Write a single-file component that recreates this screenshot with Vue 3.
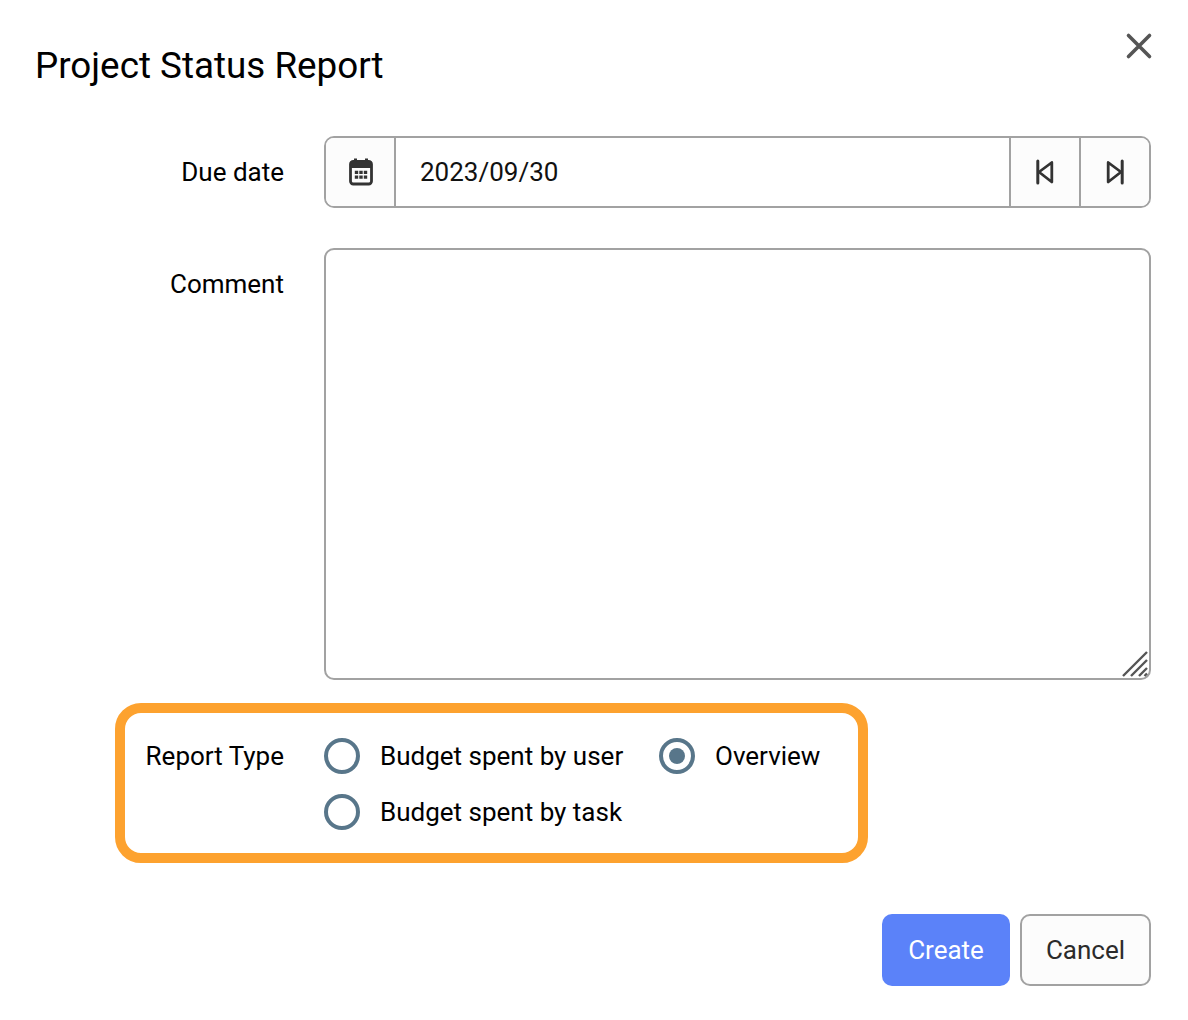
<script setup>
import { ref } from 'vue'

const dueDate = ref('2023/09/30')
const reportType = ref('overview')

const reportTypes = [
  { value: 'user', label: 'Budget spent by user' },
  { value: 'overview', label: 'Overview' },
  { value: 'task', label: 'Budget spent by task' },
]
</script>

<template>
  <div class="dialog">
    <header class="head">
      <h2 class="title">Project Status Report</h2>
      <button class="close" type="button" aria-label="Close">
        <svg width="28" height="28" viewBox="0 0 28 28">
          <path d="M3.5 3.5 L24.5 24.5 M24.5 3.5 L3.5 24.5" stroke="#555" stroke-width="3.6" stroke-linecap="round" fill="none" />
        </svg>
      </button>
    </header>

    <div class="row date-row">
      <label class="label">Due date</label>
      <div class="date-field">
        <button class="addon cal" type="button" aria-label="Open calendar">
          <svg width="26" height="28" viewBox="0 0 26 28">
            <path d="M6 0.5h3v4H6zM17 0.5h3v4h-3z" fill="#333" />
            <rect x="2.5" y="3.5" width="21" height="22.5" rx="2.8" fill="none" stroke="#333" stroke-width="2.8" />
            <rect x="2.5" y="3.5" width="21" height="6.5" fill="#333" />
            <path d="M6.8 12.8h3.4v3.2H6.8zM11.3 12.8h3.4v3.2h-3.4zM15.8 12.8h3.4v3.2h-3.4zM6.8 17.6h3.4v3.2H6.8zM11.3 17.6h3.4v3.2h-3.4zM15.8 17.6h3.4v3.2h-3.4z" fill="#333" />
          </svg>
        </button>
        <input v-model="dueDate" class="date-input" type="text" />
        <button class="addon step" type="button" aria-label="Previous">
          <svg width="20" height="26" viewBox="0 0 20 26">
            <path d="M2.8 2v22" stroke="#333" stroke-width="3" stroke-linecap="round" fill="none" />
            <path d="M16.8 3.5 L4 13 L16.8 23 Z" stroke="#333" stroke-width="2.8" stroke-linejoin="round" fill="none" />
          </svg>
        </button>
        <button class="addon step" type="button" aria-label="Next">
          <svg width="20" height="26" viewBox="0 0 20 26">
            <path d="M17.2 2v22" stroke="#333" stroke-width="3" stroke-linecap="round" fill="none" />
            <path d="M3.2 3.5 L16 13 L3.2 23 Z" stroke="#333" stroke-width="2.8" stroke-linejoin="round" fill="none" />
          </svg>
        </button>
      </div>
    </div>

    <div class="row comment-row">
      <label class="label">Comment</label>
      <div class="comment-wrap">
        <textarea class="comment"></textarea>
        <svg class="grip" width="28" height="28" viewBox="0 0 28 28">
          <path d="M2 26 L26 2 M10 26 L26 10 M18 26 L26 18 M23.5 26 L26 23.5" stroke="#555" stroke-width="2.4" fill="none" />
        </svg>
      </div>
    </div>

    <div class="report-box">
      <label class="label">Report Type</label>
      <div class="radios">
        <label
          v-for="item in reportTypes"
          :key="item.value"
          class="radio"
          @click="reportType = item.value"
        >
          <span class="dot" :class="{ on: reportType === item.value }"></span>
          <span>{{ item.label }}</span>
        </label>
      </div>
    </div>

    <footer class="actions">
      <button class="btn primary" type="button">Create</button>
      <button class="btn" type="button">Cancel</button>
    </footer>
  </div>
</template>

<style scoped>
.dialog {
  width: 1188px;
  height: 1020px;
  box-sizing: border-box;
  padding: 32px 37px 0 0;
  background: #fff;
  color: #000;
  font-family: Roboto, "Liberation Sans", sans-serif;
  font-size: 26px;
  display: flex;
  flex-direction: column;
}
.head {
  display: flex;
  justify-content: space-between;
  align-items: flex-start;
  height: 104px;
  padding-left: 35px;
}
.title {
  margin: 0;
  font-size: 36.8px;
  font-weight: 400;
  line-height: 68px;
}
.close {
  width: 28px;
  height: 28px;
  padding: 0;
  margin: 0 -2px 0 0;
  border: none;
  background: none;
  display: flex;
}
.row {
  display: flex;
  gap: 40px;
}
.label {
  width: 284px;
  flex: none;
  text-align: right;
  line-height: 72px;
}
.date-row {
  height: 72px;
}
.date-field {
  flex: 1;
  display: flex;
  box-sizing: border-box;
  height: 72px;
  border: 2px solid #a2a2a2;
  border-radius: 10px;
  overflow: hidden;
}
.addon {
  flex: none;
  padding: 0;
  border: none;
  background: #fcfcfc;
  display: flex;
  align-items: center;
  justify-content: center;
}
.cal {
  width: 70px;
  padding-left: 2px;
  border-right: 2px solid #a2a2a2;
}
.step {
  width: 70px;
  border-left: 2px solid #a2a2a2;
}
.date-input {
  flex: 1;
  min-width: 0;
  border: none;
  outline: none;
  padding: 0 24px;
  font: inherit;
  color: #111;
}
.comment-row {
  height: 432px;
  margin-top: 40px;
}
.comment-wrap {
  position: relative;
  flex: 1;
}
.comment {
  display: block;
  box-sizing: border-box;
  width: 100%;
  height: 100%;
  border: 2px solid #a2a2a2;
  border-radius: 10px;
  resize: none;
  outline: none;
  background: #fff;
}
.grip {
  position: absolute;
  right: 2px;
  bottom: 2px;
}
.report-box {
  box-sizing: border-box;
  display: flex;
  gap: 40px;
  width: 753px;
  height: 160px;
  margin: 23px 0 0 115px;
  padding: 25px 10px 0 0;
  border: 10px solid #fda22f;
  border-radius: 26px;
}
.report-box .label {
  width: 159px;
  line-height: 36px;
}
.radios {
  flex: 1;
  display: grid;
  grid-template-columns: 335px 1fr;
  grid-auto-rows: 36px;
  row-gap: 20px;
}
.radio {
  display: flex;
  align-items: center;
  gap: 20px;
  line-height: 36px;
  white-space: nowrap;
}
.dot {
  flex: none;
  box-sizing: border-box;
  width: 36px;
  height: 36px;
  border: 4.5px solid #58768a;
  border-radius: 50%;
  display: flex;
  align-items: center;
  justify-content: center;
}
.dot.on::after {
  content: "";
  width: 16px;
  height: 16px;
  border-radius: 50%;
  background: #58768a;
}
.actions {
  display: flex;
  justify-content: flex-end;
  gap: 10px;
  margin-top: 51px;
}
.btn {
  box-sizing: border-box;
  height: 72px;
  width: 131px;
  padding: 0;
  border: 2px solid #a2a2a2;
  border-radius: 10px;
  background: #fcfcfc;
  color: #2b2b2b;
  font: inherit;
}
.primary {
  width: 128px;
  border: none;
  background: #5b82f9;
  color: #fff;
}
</style>

<style>
body {
  background: #fff;
}
</style>
